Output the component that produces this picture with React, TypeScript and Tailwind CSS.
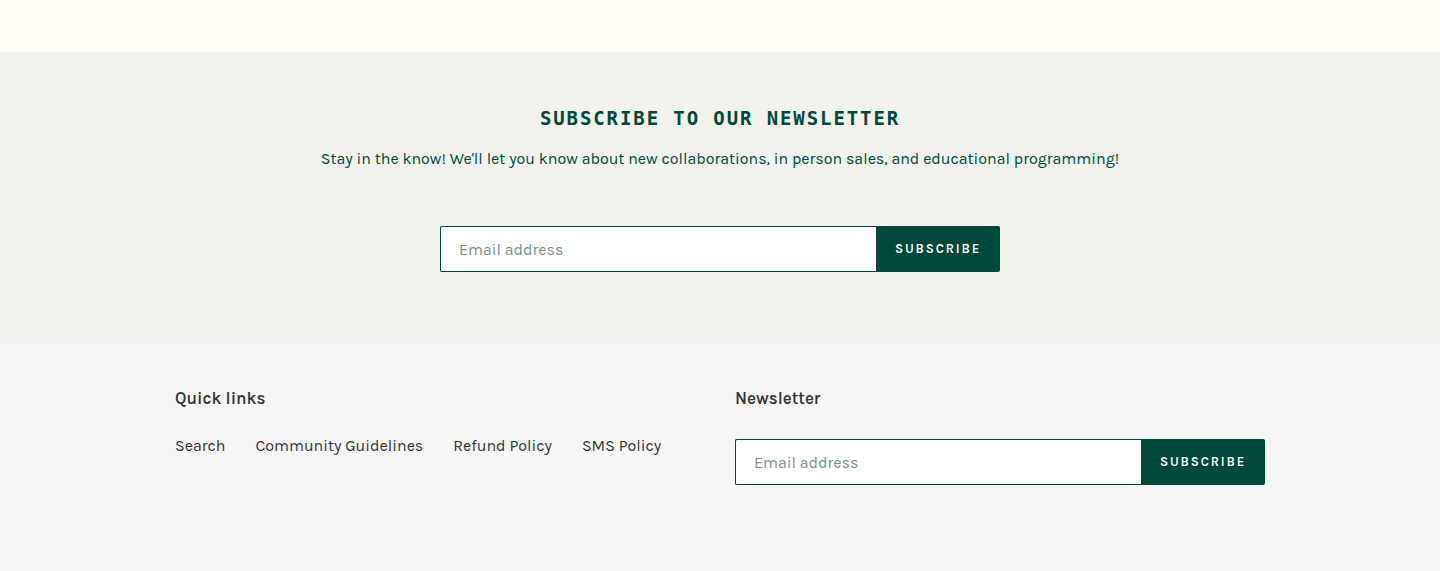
export default function App() {
  const font = { fontFamily: '"Karla", "Noto Sans", "Liberation Sans", sans-serif' };
  return (
    <div className="min-h-[571px] w-full" style={font}>
      <div className="h-[52px] bg-[#fffdf6]" />

      {/* Newsletter band */}
      <section className="flex h-[292px] flex-col items-center bg-[#f2f1ec] pt-[54px]">
        <h2
          className="text-[19px] font-bold leading-[24px] tracking-[0.1em] text-[#00493a]"
          style={{ fontFamily: '"DejaVu Sans Mono", "Liberation Mono", monospace' }}
        >
          SUBSCRIBE TO OUR NEWSLETTER
        </h2>
        <p className="mt-[19px] text-[16px] leading-[20px] text-[#00493a]">
          Stay in the know! We'll let you know about new collaborations, in person sales, and educational programming!
        </p>
        <form className="mt-[57px] flex h-[46px] w-[560px]" onSubmit={(e) => e.preventDefault()}>
          <input
            type="email"
            placeholder="Email address"
            className="h-full flex-1 rounded-l-[2px] border border-r-0 border-[#00493a] bg-white px-[18px] text-[16px] text-[#00493a] outline-none placeholder:text-[#7a9189]"
          />
          <button
            type="submit"
            className="h-full w-[124px] rounded-r-[2px] bg-[#00493a] text-[13px] font-semibold tracking-[0.14em] text-white"
          >
            SUBSCRIBE
          </button>
        </form>
      </section>

      {/* Footer */}
      <footer className="h-[227px] bg-[#f6f6f6] pt-[43px]">
        <div className="mx-auto grid w-[1090px] grid-cols-2 gap-[30px]">
          <div>
            <h3 className="text-[17px] font-semibold leading-[22px] text-[#333333]">Quick links</h3>
            <ul className="mt-[27px] flex gap-[30px] text-[16px] leading-[20px] text-[#333333]">
              <li>Search</li>
              <li>Community Guidelines</li>
              <li>Refund Policy</li>
              <li>SMS Policy</li>
            </ul>
          </div>
          <div>
            <h3 className="text-[17px] font-semibold leading-[22px] text-[#333333]">Newsletter</h3>
            <form className="mt-[30px] flex h-[46px]" onSubmit={(e) => e.preventDefault()}>
              <input
                type="email"
                placeholder="Email address"
                className="h-full flex-1 rounded-l-[2px] border border-r-0 border-[#00493a] bg-white px-[18px] text-[16px] text-[#00493a] outline-none placeholder:text-[#7a9189]"
              />
              <button
                type="submit"
                className="h-full w-[124px] rounded-r-[2px] bg-[#00493a] text-[13px] font-semibold tracking-[0.14em] text-white"
              >
                SUBSCRIBE
              </button>
            </form>
          </div>
        </div>
      </footer>
    </div>
  );
}
